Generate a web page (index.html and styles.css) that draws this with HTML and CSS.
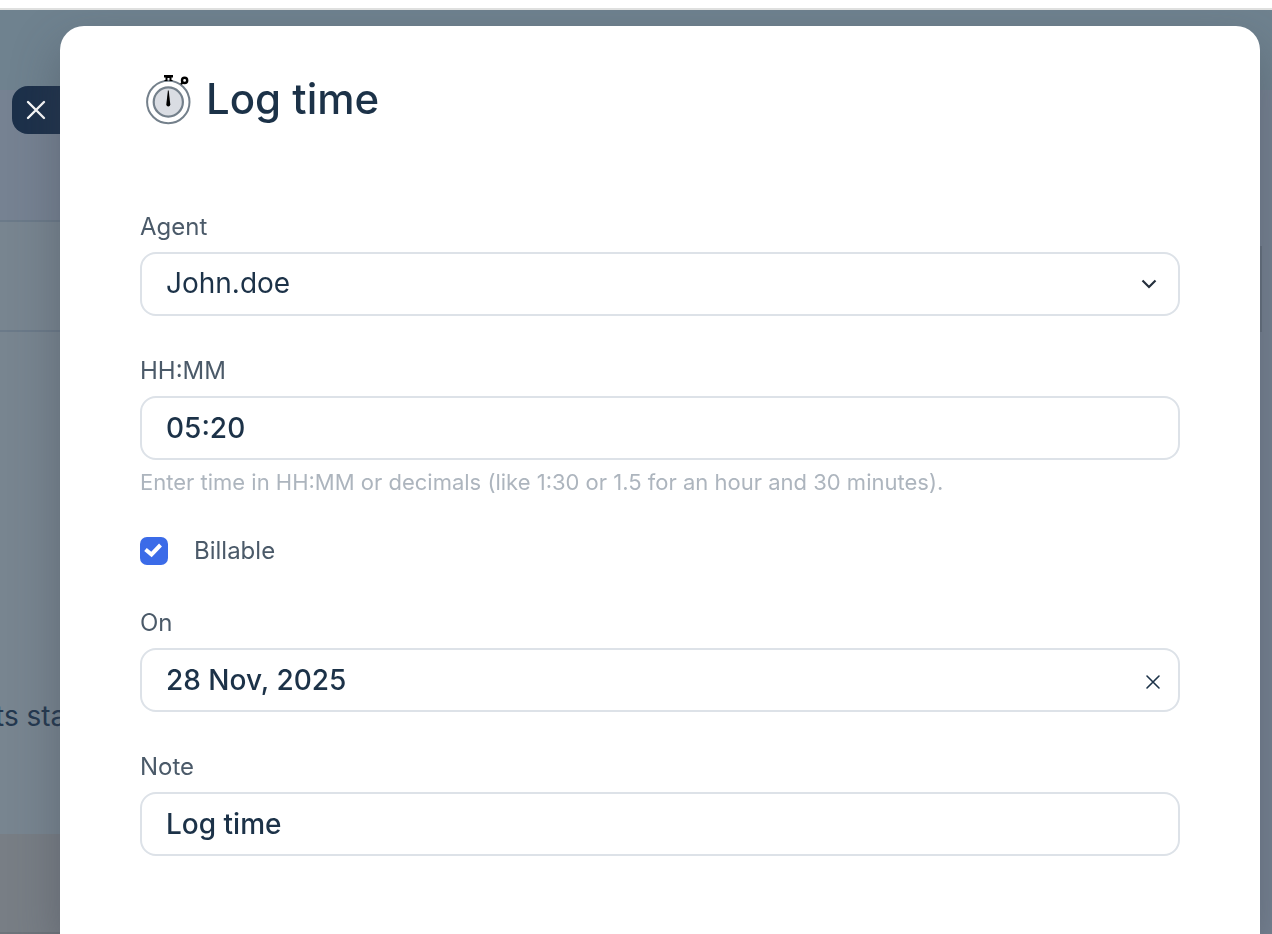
FILE: index.html
```
<!doctype html>
<html lang="en">

<head>
  <meta charset="utf-8">
  <title>Log time</title>
  <meta name="viewport" content="width=device-width, initial-scale=1">
  <link rel="stylesheet" href="styles.css">
</head>

<body>
  <div class="page">
    <div class="page-header"></div>
    <div class="page-body">
      <main class="page-main">
        <div class="page-title"></div>
        <div class="page-tabs"></div>
        <div class="page-content">
          <p>ts sta</p>
        </div>
        <div class="page-footer"></div>
      </main>
      <div class="page-rail">
        <div class="thumb"></div>
      </div>
    </div>
  </div>

  <div class="overlay">
    <button type="button" class="close" aria-label="Close">
      <svg width="20" height="20" viewBox="0 0 20 20" fill="none" stroke="currentColor" stroke-width="2.4" stroke-linecap="round">
        <path d="M2 2l16 16M18 2L2 18"/>
      </svg>
    </button>

    <section class="panel" role="dialog" aria-labelledby="panel-title">
      <header class="panel-header">
        <svg class="stopwatch" width="56" height="56" viewBox="0 0 56 56" fill="none">
          <circle cx="28.300" cy="31" r="21.200" fill="#fff" stroke="#74808b" stroke-width="2"/>
          <circle cx="28.300" cy="31" r="14.600" fill="#dadde3" stroke="#74808b" stroke-width="2.200"/>
          <path d="M24 4h9v2.500h-1.500V9h1v1h-3V7h-2v3h-3V9h1V6.500H24z" fill="#000"/>
          <circle cx="44.600" cy="9.400" r="2.600" stroke="#000" stroke-width="2.400"/>
          <path d="M42.800 11.200l-1.800 2" stroke="#000" stroke-width="2.200"/>
          <path d="M27.900 19.500h.8l1.600 14q-.2 2-2 2t-2-2z" fill="#000"/>
        </svg>
        <h1 id="panel-title">Log time</h1>
      </header>

      <form class="form">
        <div class="field">
          <label for="agent">Agent</label>
          <div class="control">
            <select id="agent" class="input">
              <option selected>John.doe</option>
            </select>
            <svg class="chevron" width="16" height="16" viewBox="0 0 16 16" fill="none" stroke="currentColor" stroke-width="2.200">
              <path d="M1.500 4.500L8 11l6.500-6.500"/>
            </svg>
          </div>
        </div>

        <div class="field">
          <label for="time">HH:MM</label>
          <input type="text" id="time" class="input" value="05:20" aria-describedby="time-help">
          <p id="time-help" class="help">Enter time in HH:MM or decimals (like 1:30 or 1.5 for an hour and 30 minutes).</p>
        </div>

        <div class="check-row">
          <input type="checkbox" id="billable" class="checkbox" checked>
          <label for="billable">Billable</label>
        </div>

        <div class="field">
          <label for="date">On</label>
          <div class="control">
            <input type="text" id="date" class="input" value="28 Nov, 2025">
            <button type="button" class="clear" aria-label="Clear date">
              <svg width="16" height="16" viewBox="0 0 16 16" fill="none" stroke="currentColor" stroke-width="1.600" stroke-linecap="round">
                <path d="M2 2l12 12M14 2L2 14"/>
              </svg>
            </button>
          </div>
        </div>

        <div class="field">
          <label for="note">Note</label>
          <input type="text" id="note" class="input" value="Log time">
        </div>
      </form>
    </section>
  </div>
</body>

</html>
```

FILE: styles.css
```
* {
  box-sizing: border-box;
}
body {
  margin: 0;
  font-family: Inter, "Liberation Sans", sans-serif;
  color: #1c3248;
  background-color: #fff;
  overflow: hidden;
}
h1, p {
  margin: 0;
}

/* dimmed page behind the panel */
.page {
  display: flex;
  flex-direction: column;
  height: 100vh;
  padding-top: 8px;
}
.page-header {
  height: 82px;
  border-top: 2px solid #dfe0df;
  background-color: #6f828f;
}
.page-body {
  flex: 1;
  display: flex;
}
.page-main {
  flex: 1;
  display: flex;
  flex-direction: column;
}
.page-rail {
  width: 12px;
  padding-top: 156px;
  background-color: #768292;
}
.thumb {
  width: 2px;
  height: 86px;
  background-color: #66727f;
}
.page-title {
  height: 132px;
  border-bottom: 2px solid #6b7a89;
  background-color: #768292;
}
.page-tabs {
  height: 110px;
  border-bottom: 2px solid #6b7a89;
  background-color: #788590;
}
.page-content {
  flex: 1;
  display: flex;
  align-items: flex-end;
  padding-bottom: 100px;
  background-color: #788590;
}
.page-content p {
  margin-left: -5px;
  font-size: 28px;
  line-height: 36px;
  color: #24384f;
}
.page-footer {
  height: 100px;
  border-bottom: 2px solid #6e747b;
  background-color: #787e85;
}

.overlay {
  position: fixed;
  inset: 10px 0 0;
  display: flex;
  align-items: flex-start;
  padding: 16px 12px 0;
  overflow: hidden;
}
.close {
  display: flex;
  align-items: center;
  justify-content: center;
  width: 48px;
  height: 48px;
  margin-top: 60px;
  padding: 0;
  border: 0;
  border-radius: 16px 0 0 16px;
  background-color: #1c304a;
  color: #fff;
}
.panel {
  flex: 1;
  align-self: stretch;
  padding: 44px 80px;
  border-radius: 24px 24px 0 0;
  background-color: #fff;
  clip-path: inset(-60px -60px 0);
  box-shadow: 0 20px 48px 0 rgba(60, 65, 78, 0.4);
}
.panel-header {
  display: flex;
  align-items: center;
  gap: 10px;
  margin-bottom: 84px;
}
.panel-header h1 {
  font-size: 42px;
  font-weight: 500;
  line-height: 58px;
}

.form {
  display: flex;
  flex-direction: column;
  gap: 40px;
}
.field {
  display: flex;
  flex-direction: column;
  gap: 10px;
}
label {
  font-size: 24px;
  line-height: 30px;
  color: #4b5a69;
}
.control {
  position: relative;
}
.input {
  display: block;
  width: 100%;
  height: 64px;
  padding: 0 24px;
  border: 2px solid #dde2e8;
  border-radius: 16px;
  background-color: #fff;
  color: #1c3248;
  font-family: inherit;
  font-size: 28px;
  font-weight: 500;
}
select.input {
  appearance: none;
  padding-bottom: 2px;
  font-weight: 400;
}
.chevron {
  position: absolute;
  top: 24px;
  right: 23px;
  color: #25303d;
  pointer-events: none;
}
.clear {
  position: absolute;
  top: 22px;
  right: 15px;
  display: flex;
  padding: 4px;
  border: 0;
  background: none;
  color: #1c3248;
}
.help {
  font-size: 22px;
  line-height: 24px;
  color: #adb5be;
}

.check-row {
  display: flex;
  align-items: center;
  gap: 26px;
  padding: 2px 0;
}
.checkbox {
  appearance: none;
  width: 28px;
  height: 28px;
  margin: 0;
  border-radius: 7px;
  background: #3b6be8 url("data:image/svg+xml,%3Csvg xmlns='http://www.w3.org/2000/svg' viewBox='0 0 28 28' fill='none' stroke='white' stroke-width='4'%3E%3Cpath d='M5.500 12.500l6 5 9-9.500'/%3E%3C/svg%3E");
}
```
